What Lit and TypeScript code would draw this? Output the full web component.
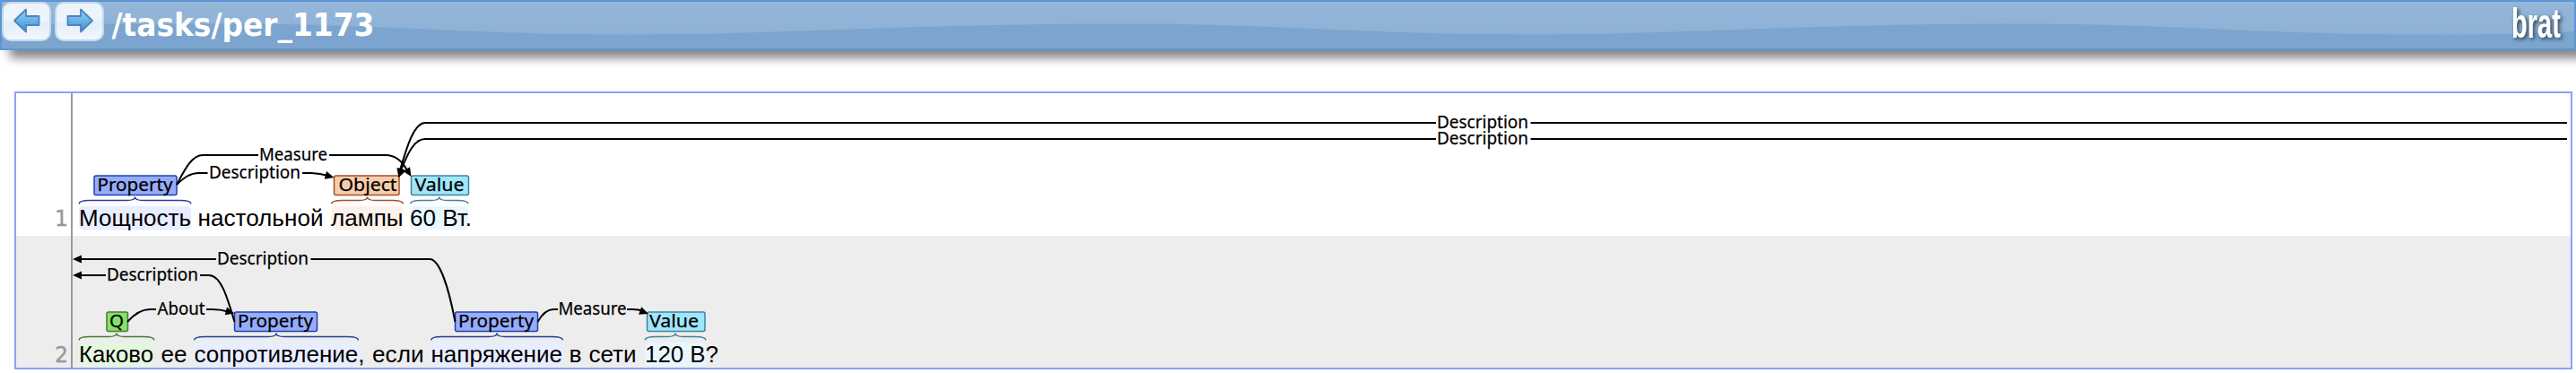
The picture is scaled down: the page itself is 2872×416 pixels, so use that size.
import { LitElement, html, svg, css } from "lit";
import { customElement } from "lit/decorators.js";

type Tag = { label: string; x: number; w: number; tx: number; tw: number; from: number; to: number; kind: string };
type Word = { t: string; x: number; w: number };
type Arc = { label: string; x: number; w: number; y: number; d: string; head?: [number, number, number] };
type Row = { n: string; top: number; words: Word[]; tags: Tag[]; arcs: Arc[] };

// Vertical offsets inside a row are measured from the top edge of its tags.
const rows: Row[] = [
  {
    n: "1", top: 196,
    words: [
      { t: "Мощность", x: 88, w: 125 }, { t: "настольной", x: 220.5, w: 140 },
      { t: "лампы", x: 369, w: 80.5 }, { t: "60 Вт.", x: 457, w: 69 },
    ],
    tags: [
      { label: "Property", x: 105, w: 92, tx: 108.5, tw: 84, from: 88, to: 213, kind: "property" },
      { label: "Object", x: 372.5, w: 72.5, tx: 377.5, tw: 65, from: 369.5, to: 449.5, kind: "object" },
      { label: "Value", x: 458.5, w: 64, tx: 462.5, tw: 55, from: 457.5, to: 522, kind: "value" },
    ],
    arcs: [
      { label: "Measure", x: 289, w: 76, y: 173, d: "M197 206C206 189 214 173 226 173H288M367 173H430C442 173 450 182 455 192", head: [458.5, 197, 58] },
      { label: "Description", x: 233, w: 102, y: 193, d: "M197 206C205 198 212 193 222 193H231.5M337 193H347Q357 193.5 366 196", head: [372.5, 198, 15] },
      { label: "Description", x: 1602, w: 102, y: 137, d: "M446 190C454 162 462 137 474 137H1601M1706.5 137H2862", head: [444.5, 198, 103] },
      { label: "Description", x: 1602, w: 102, y: 155, d: "M447 190C455 170 462 155 474 155H1601M1706.5 155H2862", head: [444.5, 198, 113] },
    ],
  },
  {
    n: "2", top: 348,
    words: [
      { t: "Каково", x: 88, w: 83 }, { t: "ее", x: 179.5, w: 29 }, { t: "сопротивление,", x: 216.5, w: 190 },
      { t: "если", x: 415, w: 57.5 }, { t: "напряжение", x: 480.5, w: 146.5 }, { t: "в", x: 634.5, w: 14 },
      { t: "сети", x: 656.5, w: 53 }, { t: "120 В?", x: 719, w: 82 },
    ],
    tags: [
      { label: "Q", x: 119, w: 23.5, tx: 122, tw: 16, from: 88, to: 172, kind: "q" },
      { label: "Property", x: 261.5, w: 92, tx: 265, tw: 84, from: 216.5, to: 399.5, kind: "property" },
      { label: "Property", x: 507.5, w: 92, tx: 511, tw: 84, from: 480.5, to: 627.5, kind: "property" },
      { label: "Value", x: 721.5, w: 64.5, tx: 724, tw: 55, from: 719, to: 787, kind: "value" },
    ],
    arcs: [
      { label: "Description", x: 242, w: 102, y: 289, d: "M88 289H241M346.5 289H479C490 289 500 320 507.500 359", head: [81, 289, 180] },
      { label: "Description", x: 119, w: 102, y: 307, d: "M88 307H118M223 307H233C246 307 253 330 261.500 359", head: [81, 307, 180] },
      { label: "About", x: 175.5, w: 53, y: 345, d: "M142 359C150 350 158 345 167 345H174M230 345H236Q246 345 254 347.500", head: [261.5, 349.5, 15] },
      { label: "Measure", x: 622.5, w: 76, y: 345, d: "M599.5 359C604 351 609 345 617 345H622M699 345H705Q712 345 717 347", head: [723, 350, 20] },
    ],
  },
];

const curly = (a: number, b: number, top: number) => {
  const m = (a + b) / 2, e = top + 31.5, y = top + 27.5, t = top + 23.5;
  return `M${a} ${e}Q${a} ${y} ${a + 12} ${y}H${m - 9}Q${m} ${y} ${m} ${t}Q${m} ${y} ${m + 9} ${y}H${b - 12}Q${b} ${y} ${b} ${e}`;
};

@customElement("brat-header")
class BratHeader extends LitElement {
  static styles = css`
    :host { display: block; height: 52px; border: 2px solid #5c96d4; position: relative; z-index: 1;
      box-shadow: 10px 10px 10px -1px #888; background: #7ba5ce; }
    .bar { display: flex; height: 52px; justify-content: space-between; position: relative; }
    .wave { position: absolute; inset: 0; width: 2868px; height: 52px; }
    .left { display: flex; gap: 4px; position: relative; }
    .btn { box-sizing: border-box; width: 55px; height: 44px; border: 2px solid #c4d7eb; border-radius: 10px;
      background: linear-gradient(#edf4fb 0 46%, #e4eef8 54%, #f0f7fd); display: flex; justify-content: center; }
    .icon { width: 32px; height: 32px; margin-top: 3px; }
    .title { width: 310px; height: 52px; margin-left: 4px; overflow: visible; }
    .name { font: bold 35px "DejaVu Sans", sans-serif; fill: #fff; }
    .logo { position: relative; width: 72px; height: 52px; overflow: visible; }
    .brat { font: bold 46px "Liberation Sans", sans-serif; fill: #fff; filter: drop-shadow(2px 2px 2px #345); }
  `;
  arrow(flip: boolean) {
    return svg`<path d="M2 16L15 3.500V11H29.500V21H15V28.500Z" transform=${flip ? "translate(32 0) scale(-1 1)" : ""}
      fill="url(#g)" stroke="#4f83bd" stroke-width="1.800" stroke-linejoin="round"/>`;
  }
  icon(flip: boolean) {
    return html`<svg class="icon" viewBox="0 0 32 32"><defs><linearGradient id="g" x1="0" y1="0" x2="0" y2="1">
      <stop offset="0" stop-color="#92d4fa"/><stop offset="1" stop-color="#3f8fd8"/></linearGradient></defs>${this.arrow(flip)}</svg>`;
  }
  render() {
    return html`<div class="bar">
      <svg class="wave" viewBox="2 2 2868 52">
        <defs><linearGradient id="w" x1="0" y1="0" x2="0" y2="1"><stop offset="0" stop-color="#95b6d9"/><stop offset="1" stop-color="#8db1d5"/></linearGradient></defs>
        <path fill="url(#w)" d="M0 0H2872V35C2815 38 2760 38.500 2700 38.500C2520 38.500 2430 26.500 2250 26.500C2010 26.500 1880 38.500 1700 38.500C1520 38.500 1430 26.500 1250 26.500C1010 26.500 880 38.500 700 38.500C520 38.500 430 26.500 250 26.500C150 26.500 80 26 0 28Z"/>
      </svg>
      <div class="left">
        <div class="btn">${this.icon(false)}</div><div class="btn">${this.icon(true)}</div>
        <svg class="title"><text class="name" x="0.500" y="38" textLength="293" lengthAdjust="spacingAndGlyphs">/tasks/per_1173</text></svg>
      </div>
      <svg class="logo"><text class="brat" x="2" y="40" textLength="55" lengthAdjust="spacingAndGlyphs">brat</text></svg>
    </div>`;
  }
}

@customElement("brat-canvas")
class BratCanvas extends LitElement {
  static styles = css`
    :host { display: block; border: 2px solid #87a3fa; }
    .doc { display: block; width: 2848px; height: 306px; }
    .text { font: 26px "Liberation Sans", Arial, sans-serif; }
    .num { font: 24.5px "DejaVu Sans", sans-serif; fill: #999; stroke: #999; stroke-width: 0.4; }
    .label { font: 19.5px "Noto Sans", "Open Sans", sans-serif; stroke: #000; stroke-width: 0.25; }
    .arc { fill: none; stroke: #000; stroke-width: 2; }
    .property { fill: #95acfc; stroke: #2440a8; } .object { fill: #f7ccac; stroke: #a4502a; }
    .value { fill: #a0e6fa; stroke: #40829e; } .q { fill: #86e06c; stroke: #457c32; }
    .hl { stroke: none; } .hl.property { fill: #e8edff; } .hl.object { fill: #fdf1ec; }
    .hl.value { fill: #e8f7fe; } .hl.q { fill: #e4f7df; }
    path.curly { fill: none !important; stroke-width: 1.3; }
    .box { stroke-width: 1.5; }
  `;
  row(r: Row) {
    return svg`
      ${r.tags.map(t => svg`<rect class="hl ${t.kind}" x=${t.from} y=${r.top + 34} width=${t.to - t.from} height="26.500" rx="5"/>
        <path class="curly ${t.kind}" d=${curly(t.from, t.to, r.top)}/>
        <rect class="box ${t.kind}" x=${t.x} y=${r.top} width=${t.w} height="21.500" rx="2"/>
        <text class="label" x=${t.tx} y=${r.top + 17} textLength=${t.tw} lengthAdjust="spacingAndGlyphs">${t.label}</text>`)}
      ${r.arcs.map(a => svg`<path class="arc" d=${a.d}/>
        ${a.head ? svg`<path d="M0 0L-10 -4.500V4.500Z" transform="translate(${a.head[0]} ${a.head[1]}) rotate(${a.head[2]})"/>` : ""}
        <text class="label" x=${a.x} y=${a.y + 6} textLength=${a.w} lengthAdjust="spacingAndGlyphs">${a.label}</text>`)}
      ${r.words.map(w => svg`<text class="text" x=${w.x} y=${r.top + 55.5} textLength=${w.w} lengthAdjust="spacingAndGlyphs">${w.t}</text>`)}
      <text class="num" x="61" y=${r.top + 55.5} textLength="15" lengthAdjust="spacingAndGlyphs">${r.n}</text>`;
  }
  render() {
    return html`<svg class="doc" viewBox="18 104 2848 306">
      <rect x="18" y="263" width="2848" height="147" fill="#ededed"/>
      <rect x="79" y="104" width="2" height="306" fill="#999"/>
      ${rows.map(r => this.row(r))}
    </svg>`;
  }
}

@customElement("app-root")
class AppRoot extends LitElement {
  static styles = css`
    :host { display: block; width: 2872px; height: 416px; background: #fff; overflow: hidden; }
    .page { padding: 46px 4px 4px 16px; }
  `;
  render() {
    return html`<brat-header></brat-header><div class="page"><brat-canvas></brat-canvas></div>`;
  }
}
